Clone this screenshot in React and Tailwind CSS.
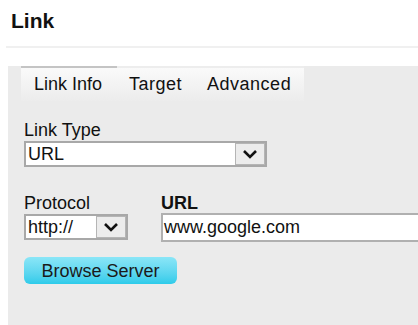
import React from "react";

function Chevron() {
  return (
    <svg width="16" height="10" viewBox="0 0 16 10" fill="none">
      <path d="M2 2l6 6 6-6" stroke="#111" strokeWidth="2.6" />
    </svg>
  );
}

function FakeSelect({ value, width }) {
  return (
    <div
      className={`flex h-[26px] ${width} border-2 border-[#a8a8a8] bg-white`}
    >
      <div className="flex-1 pl-[2px] text-[18px] leading-[22px] text-[#111]">
        {value}
      </div>
      <div className="flex w-[30px] items-center justify-center border border-[#b5b5b5] bg-[#ececec]">
        <Chevron />
      </div>
    </div>
  );
}

function App() {
  const tabs = ["Link Info", "Target", "Advanced"];

  return (
    <div
      className="h-[325px] w-[418px] overflow-hidden bg-white text-[#111]"
      style={{ fontFamily: '"Liberation Sans", Arial, sans-serif' }}
    >
      <div className="px-[11px] pt-[8px] text-[21px] font-bold leading-[26px]">
        Link
      </div>
      <div className="ml-[6px] mt-[12px] h-[2px] bg-[#f0f0f0]" />

      <div className="ml-[8px] mt-[37px] h-[260px] bg-[#ebebeb] pl-[16px]">
        <div className="-ml-[3px] -mt-[19px] flex">
          {tabs.map((t, i) => (
            <div
              key={t}
              className={`h-[35px] bg-gradient-to-b from-[#fafafa] to-[#ececec] text-[18px] leading-[32px] ${
                i === 0
                  ? "border-t-2 border-[#c4c4c4] pl-[13px] pr-[15px]"
                  : "border-t-2 border-[#ededed] pl-[12px] pr-[13px] tracking-[0.5px]"
              }`}
            >
              {t}
            </div>
          ))}
        </div>

        <div className="mt-[18px] text-[18px] leading-[22px]">Link Type</div>
        <FakeSelect value="URL" width="w-[243px]" />

        <div className="mt-[25px] flex gap-[33px]">
          <div>
            <div className="text-[18px] leading-[22px]">Protocol</div>
            <FakeSelect value="http://" width="w-[104px]" />
          </div>
          <div className="flex-1">
            <div className="text-[18px] font-bold leading-[22px]">URL</div>
            <div className="-mt-[1px] h-[29px] border-2 border-r-0 border-[#b0b0b0] bg-white pl-[1px] text-[18px] leading-[24px]">
              www.google.com
            </div>
          </div>
        </div>

        <button className="mt-[15px] h-[27px] w-[153px] rounded-[6px] bg-gradient-to-b from-[#8ae6f7] to-[#2ccbea] text-[18px] leading-[26px] text-[#1a1a1a]">
          Browse Server
        </button>
      </div>
    </div>
  );
}

export default App;
